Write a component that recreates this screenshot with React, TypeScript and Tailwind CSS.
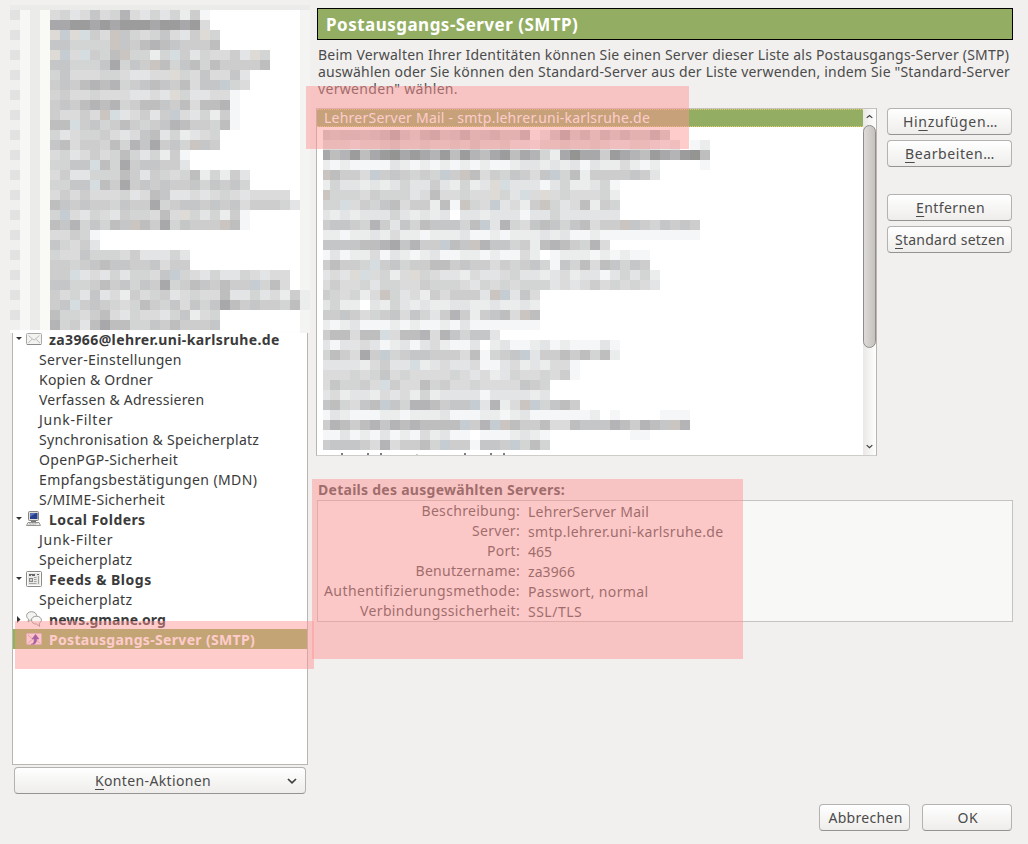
import type { ReactNode } from 'react';

const SHADES: Record<string, string> = {
  k: '#949493', '1': '#9c9c9c', '2': '#a8a8aa', '3': '#b4b4b6', '4': '#bebebf', '5': '#c5c6c7',
  '6': '#cdcdcd', '7': '#d3d4d4', '8': '#dbdbdc', '9': '#e3e4e5', a: '#ebecec', b: '#f5f6f7',
  p: '#cbc5c1', q: '#c5ccd2', r: '#dedad6', s: '#d6dde1',
};

// One string per 10px line, one character per cell; a dot leaves the cell empty.
const ACCOUNTS = [
  '8 7 9 8 5 8 7 3 8 9 7 9 7 a 6 b',
  '2 2 1 1 2 1 2 1 1 1 2 1 1 2 1 8',
  'r q r s 6 8 p 5 7 8 7 5 8 9 6 r 7',
  '5 5 7 7 7 7 p 5 6 4 3 4 5 6 6 6 4',
  'r q 8 s 6 7 4 p 7 7 a 7 s 6 9 7 8 8 6 9 r 7',
  '5 5 7 7 7 5 2 7 5 6 p 4 7 5 4 7 4 6 6 6 6 4',
  '7 5 8 8 8 7 7 8 9 9 8 8 r 7 8 5 8 8 5 9',
  '6 5 6 4 3 4 3 7 6 5 4 5 6 4 8 5 5 q 7 8',
  '7 6 8 8 7 8 8 8 9 9 8 9 r 7 9 9 8 8 b',
  '6 5 6 4 3 4 3 7 6 4 4 5 6 4 8 4 4 3 b',
  '6 8 8 6 8 p s 9 8 6 9 6 q 8 9 7 a 6 b',
  '4 4 s 6 5 7 6 4 6 7 6 5 3 4 6 6 7 4 b',
  '7 9 8 7 7 6 8 9 8 5 4 9 7 a 9 8 7',
  '5 4 8 6 6 7 4 7 3 5 2 6 5 7 p 5 6',
  '8 7 9 8 6 8 7 4 7 9 7 a 6 b',
  '7 7 5 5 s 4 7 2 6 5 5 6 6 9',
  '8 6 9 9 7 7 7 4 6 9 6 7 8 7 4 a 7 a 6 9',
  '7 7 5 5 s 4 6 2 6 5 6 5 6 6 5 7 5 6 5 7',
  '8 6 8 6 8 8 8 7 9 8 4 5 9 9 8 9 8 7 8 9 8 8 8 8',
  '4 5 6 5 6 6 7 5 6 6 2 7 6 5 5 6 5 6 5 8 6 6 6 7 9',
  '7 q 8 9 7 8 9 6 7 7 8 4 8 r 7 9 7 a 6 b',
  '4 5 3 7 5 7 4 5 p 4 6 2 7 5 6 6 6 p 4 b',
  '8 8 6 7 b',
  '5 7 8 6 9',
  '7 8 8 5 7 7 7 8 6 9 9 9 7 9',
  '6 6 7 6 5 4 5 5 6 6 5 8 6 6',
  '6 6 s 9 8 9 7 9 7 7 8 5 q 7 8 9 7 9 9 7 8 9 8 8',
  '5 5 7 7 6 4 6 5 7 5 6 2 7 6 4 5 6 4 6 6 q 7 4 8',
  '6 8 7 9 5 9 8 a 6 8 7 6 9 8 7 8 8 4 9 9 7 9 8 a 6 a',
  '6 5 s 6 5 6 7 8 7 4 6 7 5 8 5 7 5 2 4 6 5 6 6 7 4 a',
  '4 7 7 8 6 4 8 9 7 8 8 9 7 5 a 8 7',
  '3 7 6 9 4 2 4 4 7 7 5 6 4 6 6 6 5',
];

const SERVERS = [
  '5 6 5 5 6 5 4 2 5 7 4 3 6 5 3 6 5 4 6 6 3 b 9 5 2 6 4 7 4 6 4 6 6 3 6',
  '8 8 8 9 8 8 7 6 8 8 7 8 8 7 8 6 8 8 7 9 9 a 8 8 7 8 8 7 8 9 9 8 8 9 a 9 . b a',
  '2 4 3 1 4 2 1 k 2 1 2 3 1 4 1 3 4 2 1 4 2 3 7 a 2 k 2 2 6 1 2 3 4 1 2 3 1 k 4',
  'a b a b b b b 9 a b a b a b a b a b b a 9 9 a 9 a 9 b 9 a a 8 a b a . . . . b',
  'p 4 6 6 8 q 6 5 6 7 6 7 q 6 p 4 8 6 7 5 6 8 5 q 7 4 a 6 6 6 6 5 6 9',
  'a 7 9 9 a 9 a 9 7 9 9 6 9 a 7 a 9 r s 9 9 9 b 9 7 a a 9 7 b',
  'p 7 7 7 8 6 7 7 7 9 8 4 8 8 7 8 8 r 7 9 s 8 r 8 7 8 8 8 7 a',
  '7 7 s 8 6 7 5 4 8 6 6 a 4 b p 7 8 q 9 8 a 6 p 7 9 8 4 a 6 7',
  '9 a 9 a 9 9 9 7 9 a 9 a 9 . 9 9 a 9 9 9 b 9 9 7 9 9 9 9 9 9',
  '6 5 5 6 7 3 6 9 5 7 4 5 5 5 7 4 q 9 3 7 8 5 4 5 7 5 4 8 6 6 p 5 6 7 5 6 5 6',
  'a a b a a 9 a 8 a a b a a a 9 b b a b a a a 9 a 9 b b a b b b b b b b b b b',
  '5 5 5 5 4 4 3 2 5 3 6 6 q 4 5 p 3 5 5 7 6 a 4 3 4 6 7 3 8',
  'b 9 b a a 8 b 9 a b a 9 b b a a b a b b 8 a . b a a a b a b a b b',
  '6 4 6 6 7 s 6 5 7 6 6 4 4 6 5 6 6 8 6 7 6 5 7 b 5 7 4 8 4 5 7 5 6',
  '9 8 9 r s 8 7 a 8 r 7 8 9 9 a 8 9 9 8 7 9 9 a 9 8 a 9 9 b 9 7 9 7 a',
  '8 6 8 8 7 9 7 7 8 8 6 7 7 7 8 9 7 8 7 8 7 7 7 9 8 9 8 6 8 7 8 7 8 9',
  '6 7 8 7 a 8 p 7 9 8 a 6 8 6 6 6 9 p q 9 5 8',
  '9 7 a a . 9 a 7 9 a 9 a a 9 9 a a 9 a a 9 a',
  '6 6 5 6 8 7 6 5 8 5 7 9 6 3 6 a 6 5 4 8 p 4',
  'a b a 9 b b b a b a b b a b 9 b b b b b b b',
  '6 4 4 8 4 4 s 8 4 4 3 8 3 5 7 5 5 9',
  '9 b 9 9 8 9 b a 9 b 9 8 a b b 9 . a 9 b b a 9 b a b b b 9 b',
  '7 4 6 8 2 6 q 7 6 5 5 6 6 6 8 4 b 7 6 5 q 9 6 6 4 6 4 7 4 a',
  '9 9 9 9 a 8 6 9 9 s a 9 8 9 9 8 b b 9 8 a 9 a 8 8 b',
  '8 8 8 7 8 7 5 8 7 8 8 8 8 7 8 9 8 a 9 7 8 8 7 8 6 b',
  '8 5 7 7 6 8 s 6 8 8 4 7 6 8 8 7 8 8 8 8 5 6 7',
  '9 8 a 9 9 a 8 9 8 a 7 a 9 9 9 9 b 9 9 9 9 a 9',
  '5 4 7 8 5 4 q 5 7 3 3 4 6 5 5 q 9 3 a 8 p q 7 5 4 6',
  'b 9 a b b b a a b a a a 9 b b b a a b a 9 b b b b b b a . b . . . . b b b',
  '6 3 4 6 4 3 5 3 4 3 4 4 4 4 q 6 3 q p 4 6 6 4 8 8 4 5 5 5 3 4 6 3 4 5 p 3',
  'b b 9 b a b 9 b a b 8 a 9 b b . b b b a 9 a b . . . . . . . . b b',
  '6 5 5 5 6 8 3 8 6 6 4 7 q 6 6 b 5 5 6 q 7 4 7',
];

function Mosaic({ rows, first, className }: { rows: string[]; first: number; className: string }) {
  return (
    <svg className={className} width="400" height={rows.length * 10} shapeRendering="crispEdges" aria-hidden="true">
      {rows.map((row, y) =>
        row.split(' ').map((shade, i) =>
          SHADES[shade] ? (
            <rect
              key={`${y}-${i}`}
              x={i === 0 ? 0 : first + (i - 1) * 10}
              y={y * 10}
              width={i === 0 ? first : 10}
              height={10}
              fill={SHADES[shade]}
            />
          ) : null,
        ),
      )}
    </svg>
  );
}

function HiddenAccounts() {
  return (
    <div className="absolute top-[5px] left-[10px] z-10 h-[328px] w-[300px] bg-[#fefefe]" aria-hidden="true">
      <div className="h-[5px] bg-[#ebebea]" />
      <div className="flex h-[320px]">
        <div className="w-[10px] bg-[repeating-linear-gradient(#e2e2e2_0_10px,#f0f0ef_10px_20px)]" />
        <div className="w-[10px] bg-[#f7f7f6]" />
        <div className="w-[10px] bg-[#ebebea]" />
        <div className="w-[10px] bg-[#f9faf6]" />
        <div className="relative w-[250px] bg-white">
          <Mosaic rows={ACCOUNTS} first={10} className="absolute top-0 left-0 z-10 w-[260px]" />
        </div>
        <div className="h-[323px] w-[10px] bg-[#f4f4f3]" />
      </div>
    </div>
  );
}

function Highlight({ className }: { className: string }) {
  return <div className={`pointer-events-none absolute z-20 bg-[rgba(255,147,147,0.47)] ${className}`} />;
}

function MailIcon() {
  return (
    <svg width="16" height="16" viewBox="0 0 16 16">
      <rect x=".5" y="2.5" width="15" height="11" rx="1" fill="#f3f3f1" stroke="#aaa9a6" />
      <path d="M2 12.2 6.2 8M14 12.2 9.8 8M2.5 4.5 8 9.2l5.500-4.700" fill="none" stroke="#b5b4b1" strokeWidth=".9" />
      <path d="M1 13.500h14" stroke="#8b8a87" />
    </svg>
  );
}

function ComputerIcon() {
  return (
    <svg width="16" height="16" viewBox="0 0 16 16">
      <rect x="2.500" y=".5" width="10" height="9" rx="1" fill="#deddd9" stroke="#85847f" />
      <rect x="4" y="2" width="7.500" height="6" fill="#263f8c" />
      <path d="M4 2h6L4 6z" fill="#5872b4" />
      <path d="M5 10h5v1H5z" fill="#777" />
      <path d="M2 11.500h11l1.500 3H.5z" fill="#efeeeb" stroke="#969590" />
      <path d="M3 12.500h9M2.500 13.500h7" stroke="#aaa" strokeWidth=".7" strokeDasharray="1 .5" />
    </svg>
  );
}

function FeedIcon() {
  return (
    <svg width="16" height="16" viewBox="0 0 16 16">
      <rect x=".5" y=".5" width="15" height="15" rx="1" fill="#e8e8e6" stroke="#8c8b88" />
      <rect x="1.500" y="1.500" width="13" height="13" fill="none" stroke="#fafaf9" />
      <path d="M3 3.500h6M11 3.500h2M3 4.500h2M6 4.500h3" stroke="#666" />
      <rect x="3.500" y="7.500" width="3" height="3" fill="#d1d1cf" stroke="#888" />
      <path d="M8 6.500h2.500M8 8.500h2.500M8 10.500h2.500M3 12.500h7.500M12.500 5v8" stroke="#a5a5a3" />
    </svg>
  );
}

function NewsIcon() {
  return (
    <svg width="16" height="16" viewBox="0 0 16 16">
      <path d="M5.500.7C2.700.7.600 2.400.600 4.700c0 1.500.8 2.700 2 3.500L2 11l2.700-2c3.400.3 6-1.300 6-4.200 0-2.400-2.300-4.100-5.200-4.100z" fill="#f3f3f2" stroke="#9d9c99" />
      <path d="M10.500 5.200c-2.900 0-5 1.600-5 3.900 0 2.500 2.200 4 5 4l3.200 2.300-.4-3.100c1.300-.7 2.100-1.800 2.100-3.200 0-2.300-2.200-3.900-4.900-3.900z" fill="#f7f7f6" stroke="#999895" />
    </svg>
  );
}

function OutgoingIcon() {
  return (
    <svg width="16" height="16" viewBox="0 0 16 16">
      <rect x=".5" y="2.500" width="15" height="11" rx="1" fill="#f5f1f4" stroke="#d9bdd0" />
      <path d="m2 12.500 4-4M14 12.500l-4-4M2 4l5 4.500" fill="none" stroke="#c7aebf" />
      <path d="M5 13.300c2.700-.4 3.200-2.300 3.200-5.300H6L9.500 3.300 13 8h-2.300c0 3.500-1.300 5.800-5.700 5.300z" fill="#5f36b0" stroke="#4f259f" strokeWidth=".4" />
    </svg>
  );
}

function Chevron({ up, className }: { up?: boolean; className?: string }) {
  return (
    <svg className={className} width="10" height="6" viewBox="0 0 10 6" fill="none" stroke="#3f3f3d" strokeWidth="1.700">
      <path d={up ? 'M1 5l4-3.500L9 5' : 'M1 1l4 3.800L9 1'} />
    </svg>
  );
}

function Account({ icon, closed, selected, children }: { icon: ReactNode; closed?: boolean; selected?: boolean; children: ReactNode }) {
  return (
    <div className={`flex h-5 items-center font-bold ${selected ? 'bg-[#8eb35a] text-white' : ''}`}>
      <span className="flex w-[13px] shrink-0 justify-start pl-[3px]">
        {!selected && (
          <svg width="7" height="7" viewBox="0 0 7 7" fill="#333">
            <path d={closed ? 'M1 0l3.500 3.500L1 7z' : 'M0 1h6L3 4z'} />
          </svg>
        )}
      </span>
      <span className="mr-[7px] w-4 shrink-0">{icon}</span>
      {children}
    </div>
  );
}

function Sub({ children }: { children: ReactNode }) {
  return <div className="flex h-5 items-center pl-[26px]">{children}</div>;
}

function Button({ className = '', children }: { className?: string; children: ReactNode }) {
  return (
    <button
      className={`flex h-[27px] shrink-0 items-center justify-center rounded-[4px] border border-[#b3b2b0] border-b-[#949391] bg-linear-to-b from-white to-[#eeedeb] whitespace-nowrap ${className}`}
    >
      {children}
    </button>
  );
}

function Key({ children }: { children: string }) {
  return <span className="underline decoration-1 underline-offset-[3px]">{children}</span>;
}

function AccountTree() {
  return (
    <aside className="flex w-[296px] shrink-0 flex-col pt-2">
      <div className="h-[757px] border border-[#b9b6b2] bg-white pt-[320px] text-[#3a3a3a]">
        <Account icon={<MailIcon />}><span className="tracking-[0.39px]">za3966@lehrer.uni-karlsruhe.de</span></Account>
        <Sub><span className="tracking-[0.34px]">Server-Einstellungen</span></Sub>
        <Sub><span className="tracking-[0.21px]">Kopien &amp; Ordner</span></Sub>
        <Sub><span className="tracking-[0.24px]">Verfassen &amp; Adressieren</span></Sub>
        <Sub><span className="tracking-[0.72px]">Junk-Filter</span></Sub>
        <Sub><span className="tracking-[0.28px]">Synchronisation &amp; Speicherplatz</span></Sub>
        <Sub><span className="tracking-[0.32px]">OpenPGP-Sicherheit</span></Sub>
        <Sub><span className="tracking-[0.4px]">Empfangsbestätigungen (MDN)</span></Sub>
        <Sub><span className="tracking-[0.3px]">S/MIME-Sicherheit</span></Sub>
        <Account icon={<ComputerIcon />}><span className="tracking-[0.42px]">Local Folders</span></Account>
        <Sub><span className="tracking-[0.72px]">Junk-Filter</span></Sub>
        <Sub><span className="tracking-[0.38px]">Speicherplatz</span></Sub>
        <Account icon={<FeedIcon />}><span className="tracking-[0.5px]">Feeds &amp; Blogs</span></Account>
        <Sub><span className="tracking-[0.38px]">Speicherplatz</span></Sub>
        <Account icon={<NewsIcon />} closed><span className="tracking-[0.06px]">news.gmane.org</span></Account>
        <Account icon={<OutgoingIcon />} selected><span className="tracking-[0.33px]">Postausgangs-Server (SMTP)</span></Account>
      </div>
      <Button className="mx-[2px] mt-[2px] pr-2 pl-1">
        <span className="flex-1 text-center tracking-[0.36px]"><Key>K</Key>onten-Aktionen</span>
        <Chevron />
      </Button>
    </aside>
  );
}

function ServerList() {
  return (
    <div className="flex h-[348px] w-[561px] overflow-hidden border border-[#b9b6b2] border-t-[#c5c2be] border-b-[#cfcdca] bg-white">
      <div className="flex-1">
        <div className="flex h-[18px] items-center border-y border-dotted border-[#e0cf70] bg-[#93ae62] pb-0.5 pl-[7px] tracking-[0.24px] text-white">
          LehrerServer Mail - smtp.lehrer.uni-karlsruhe.de
        </div>
        <div className="pt-[3px] pl-[6px]">
          <Mosaic rows={SERVERS} first={7} className="block" />
          <svg className="mt-[3px] block" width="200" height="3" aria-hidden="true">
            {[18, 44, 57, 141, 167, 180].map((x) => (
              <rect key={x} x={x} width="2" height="2" fill="#7c7c86" />
            ))}
            <rect x="93" y="1" width="2" height="1" fill="#ccc" />
          </svg>
        </div>
      </div>
      <div className="flex w-[13px] flex-col items-center bg-linear-to-r from-[#e9e8e6] to-white">
        <Chevron up className="mt-[5px] h-[5px] w-[7px]" />
        <div className="mt-[6px] h-[223px] w-[13px] rounded-full border border-[#8f8d8a] bg-linear-to-r from-[#dddbd8] to-[#c5c2be]" />
        <Chevron className="mt-auto mb-[6px] h-[5px] w-[7px]" />
      </div>
    </div>
  );
}

const PAIR = 'flex h-5 items-center';
const LABEL = 'w-[202px] text-right';
const VALUE = 'pl-2 pt-0.5';

function Details() {
  return (
    <section className="mt-[24px]">
      <h2 className="h-[20px] pl-[2px] leading-[20px] font-bold tracking-[0.27px]">Details des ausgewählten Servers:</h2>
      <div className="ml-px h-[122px] w-[696px] border border-[#c5c3bf] bg-[#f8f8f6]">
        <div className="-mt-px">
          <div className={PAIR}><div className={`${LABEL} tracking-[0.32px]`}>Beschreibung:</div><div className={`${VALUE} tracking-[0.26px]`}>LehrerServer Mail</div></div>
          <div className={PAIR}><div className={`${LABEL} tracking-[0.3px]`}>Server:</div><div className={`${VALUE} tracking-[0.33px]`}>smtp.lehrer.uni-karlsruhe.de</div></div>
          <div className={PAIR}><div className={`${LABEL} tracking-[0.29px]`}>Port:</div><div className={VALUE}>465</div></div>
          <div className={PAIR}><div className={`${LABEL} tracking-[0.28px]`}>Benutzername:</div><div className={`${VALUE} tracking-[0.09px]`}>za3966</div></div>
          <div className={PAIR}><div className={`${LABEL} tracking-[0.43px]`}>Authentifizierungsmethode:</div><div className={`${VALUE} tracking-[0.34px]`}>Passwort, normal</div></div>
          <div className={PAIR}><div className={`${LABEL} tracking-[0.35px]`}>Verbindungssicherheit:</div><div className={`${VALUE} tracking-[0.5px]`}>SSL/TLS</div></div>
        </div>
      </div>
    </section>
  );
}

export default function App() {
  return (
    <div className="relative flex h-[844px] w-[1028px] overflow-hidden bg-[#f1f0ee] pl-3 font-['Noto_Sans',sans-serif] text-[14px] leading-[17px] text-[#4b4b4b]">
      <AccountTree />
      <main className="ml-2 flex w-[697px] shrink-0 flex-col pt-2">
        <h1 className="ml-px flex h-8 items-center border border-black bg-[#93ae62] pl-[8px] text-[17px] font-bold tracking-[0.48px] text-white">
          Postausgangs-Server (SMTP)
        </h1>
        <p className="mt-[6px] h-[62px] pl-[2px] whitespace-nowrap">
          <span className="block tracking-[0.21px]">Beim Verwalten Ihrer Identitäten können Sie einen Server dieser Liste als Postausgangs-Server (SMTP)</span>
          <span className="block tracking-[0.2px]">auswählen oder Sie können den Standard-Server aus der Liste verwenden, indem Sie "Standard-Server</span>
          <span className="block tracking-[0.32px]">verwenden" wählen.</span>
        </p>
        <div className="flex gap-[10px]">
          <ServerList />
          <div className="flex w-[125px] flex-col gap-[5px]">
            <Button className="pl-0.5 tracking-[0.67px]"><span>Hi<Key>n</Key>zufügen…</span></Button>
            <Button className="pl-px tracking-[0.6px]"><span><Key>B</Key>earbeiten…</span></Button>
            <Button className="mt-[22px] pl-0.5 tracking-[0.42px]"><span><Key>E</Key>ntfernen</span></Button>
            <Button className="pl-px tracking-[0.25px]"><span><Key>S</Key>tandard setzen</span></Button>
          </div>
        </div>
        <Details />
        <div className="mt-[182px] flex justify-end gap-3 pr-px">
          <Button className="w-[91px] pl-0.5 tracking-[0.3px]">Abbrechen</Button>
          <Button className="w-[90px] pl-0.5 tracking-[0.69px]">OK</Button>
        </div>
      </main>
      <HiddenAccounts />
      <Highlight className="top-[86px] left-[306px] h-[63px] w-[383px]" />
      <Highlight className="top-[479px] left-[312px] h-[180px] w-[431px]" />
      <Highlight className="top-[621px] left-[15px] h-[48px] w-[299px]" />
    </div>
  );
}
